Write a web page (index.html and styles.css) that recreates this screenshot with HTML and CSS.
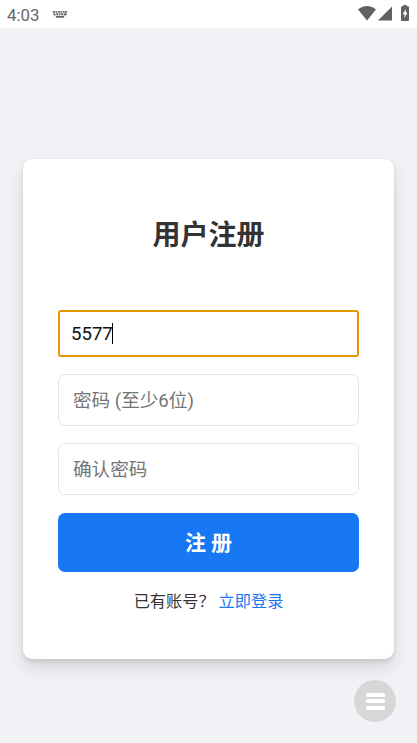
FILE: index.html
```html
<!DOCTYPE html>
<html lang="zh-CN">
<head>
<meta charset="utf-8">
<meta name="viewport" content="width=device-width, initial-scale=1">
<title>用户注册</title>
<link rel="stylesheet" href="styles.css">
</head>
<body>
<header class="status">
  <span class="time">4:03</span>
  <svg class="keyboard" width="16" height="9" viewBox="0 0 16 9" fill="#666">
    <path d="M.8 1h2v1.700h-2zM3.500 1h1.800v1.700H3.500zM6 1h1.800v1.700H6zM8.500 1h1.800v1.700H8.500zM11 1h1.600v1.700H11zM13.200 1h2v1.700h-2zM1.400 3.200h2v1.700h-2zM4.200 3.200H6v1.700H4.200zM6.700 3.200h1.800v1.700H6.700zM9.200 3.200H11v1.700H9.200zM11.700 3.200h2.900v1.700h-2.900zM2.200 5.300h1.300v1H2.200zM12.500 5.300h1.300v1h-1.300zM4 5.800h8v2H4z"/>
  </svg>
  <div class="indicators">
    <svg width="18" height="16" viewBox="0 0 18 16" fill="#616161"><path d="M9 15.500 0 4.500Q4 1 9 1T18 4.500Z"/></svg>
    <svg class="signal" width="14" height="16" viewBox="0 0 14 16" fill="#616161"><path d="M14 1.500v14H0Z"/></svg>
    <svg class="battery" width="8" height="16" viewBox="0 0 8 16"><path fill="#616161" d="M2.3 0h3.4v1.3H7q1 0 1 1V15q0 1-1 1H1q-1 0-1-1V2.300q0-1 1-1h1.300z"/><path fill="#fff" d="M4.700 4 1.600 9.300h1.900V13l3-5.400H4.700z"/></svg>
  </div>
</header>
<main class="page">
  <form class="card">
    <h1 class="title">用户注册</h1>
    <div class="field focused"><span>5577</span><i class="caret"></i></div>
    <div class="field">密码 (至少6位)</div>
    <div class="field">确认密码</div>
    <button class="submit" type="button">注 册</button>
    <p class="login">已有账号？<a class="link">立即登录</a></p>
  </form>
</main>
<div class="menu"><i></i><i></i><i></i></div>
</body>
</html>
```
FILE: styles.css
```css
* { box-sizing: border-box; }
body {
  margin: 0;
  height: 743px;
  overflow: hidden;
  display: flex;
  flex-direction: column;
  background: #f0f2f5;
  font-family: Roboto, "Noto Sans CJK SC", sans-serif;
  color: #333;
}
.status {
  height: 28px;
  flex: none;
  display: flex;
  align-items: center;
  padding: 0 8px 0 7px;
  background: #fff;
}
.time { font-size: 16.8px; line-height: 28px; color: #666; width: 45px; padding-top: 1px; }
.keyboard { margin-top: 1px; }
.indicators { margin-left: auto; display: flex; align-items: center; }
.indicators svg { margin-top: -2px; }
.signal { margin-left: 2px; }
.indicators .battery { margin-left: 9px; }
.page { flex: 1; padding: 130.5px 23px 0; }
.card {
  height: 500px;
  padding: 51px 35px 0;
  background: #fff;
  border-radius: 9.5px;
  box-shadow: 0 2.3px 4.6px rgba(0,0,0,.1), 0 9.3px 18.6px rgba(0,0,0,.1);
}
.title {
  margin: 0 0 59px;
  height: 41px;
  font-size: 28px;
  line-height: 51px;
  font-weight: 700;
  text-align: center;
}
.field {
  height: 52px;
  margin-bottom: 17px;
  padding: 0 14px 3px;
  display: flex;
  align-items: center;
  border: 1.2px solid #e5e7e9;
  border-radius: 7px;
  font-size: 18.6px;
  color: #757575;
}
.focused {
  height: 47px;
  margin-bottom: 17.500px;
  padding: 0 11px;
  border: 2px solid #e59700;
  border-radius: 3px;
  color: #111;
}
.focused span { padding-top: 1px; }
.caret { width: 1px; height: 21px; margin-left: -1px; background: #000; }
.submit {
  display: block;
  width: 100%;
  height: 59px;
  padding: 0;
  margin-top: 17.500px;
  border: 0;
  border-radius: 7px;
  background: #1877f2;
  color: #fff;
  font: 700 21px/61px Roboto, "Noto Sans CJK SC", sans-serif;
}
.login { margin: 18px 0 0; font-size: 16.2px; line-height: 24px; text-align: center; }
.link { color: #1877f2; margin-left: 4px; }
.menu {
  position: absolute;
  left: 354px;
  top: 680px;
  width: 42px;
  height: 42px;
  border-radius: 50%;
  background: #d7d7d7;
  display: flex;
  flex-direction: column;
  align-items: center;
  justify-content: center;
  gap: 2.500px;
}
.menu i { width: 19px; height: 4px; border-radius: 1.500px; background: #fff; }
```
